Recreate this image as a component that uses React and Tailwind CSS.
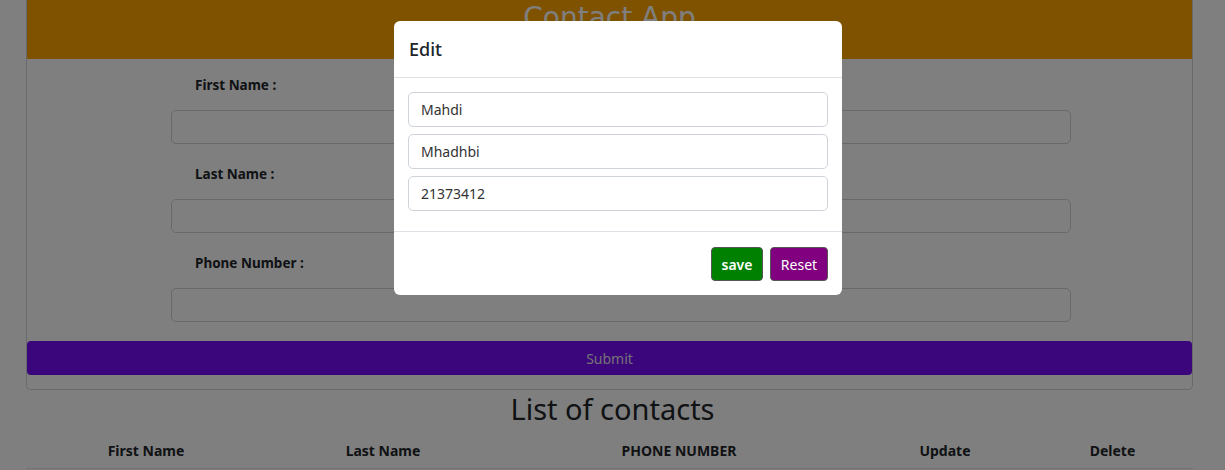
import React from 'react';

const Field = ({ label, first }) => (
  <div className={first ? 'pt-[16px]' : 'pt-[20px]'}>
    <div className="ml-[168px] h-[20px] text-[13.5px] leading-[20px] font-bold text-[#212529]">{label}</div>
    <div className="ml-[144px] mt-[15px] w-[900px] h-[34px] rounded-[5px] border border-[#ced4da] bg-white" />
  </div>
);

const ModalInput = ({ value }) => (
  <div className="mb-[7px] h-[35px] rounded-[5px] border border-[#ced4da] px-[12px] flex items-center text-[14px] text-[#333]">
    {value}
  </div>
);

export default function App() {
  return (
    <div className="relative min-h-[470px] bg-white overflow-hidden" style={{ fontFamily: '"Noto Sans", "Open Sans", sans-serif' }}>
      <div className="ml-[26px] w-[1167px] border border-t-0 border-[#ced4da] rounded-b-[5px] pb-[14px]">
        <div className="h-[59px] bg-[#ffa500] flex justify-center overflow-hidden">
          <div className="mt-[1px] text-[28px] leading-[34px] text-white" style={{ fontFamily: '"Comic Sans MS", "DejaVu Sans", cursive' }}>
            Contact App
          </div>
        </div>
        <Field label="First Name :" first />
        <Field label="Last Name :" />
        <Field label="Phone Number :" />
        <div className="mt-[19px] h-[34px] rounded-[4px] bg-[#760bf7] flex items-center justify-center text-[14px] text-[#e8e0f0]">
          Submit
        </div>
      </div>

      <div className="h-[38px] text-center text-[29px] leading-[38px] text-[#212529]">List of contacts</div>

      <div className="ml-[26px] w-[1167px] grid grid-cols-[240px_234px_358px_174px_161px] border-b border-[#dee2e6] pt-[13px] pb-[7px] text-[14px] leading-[20px] font-bold text-[#212529] text-center">
        <div>First Name</div>
        <div>Last Name</div>
        <div>PHONE NUMBER</div>
        <div>Update</div>
        <div>Delete</div>
      </div>

      <div className="absolute inset-0 bg-black/50" />

      <div className="absolute left-[394px] top-[21px] w-[448px] bg-white rounded-[6px]">
        <div className="h-[57px] px-[15px] flex items-center border-b border-[#dee2e6] text-[18px] font-medium text-[#212529]">
          Edit
        </div>
        <div className="px-[14px] pt-[14px] pb-[13px] border-b border-[#dee2e6]">
          <ModalInput value="Mahdi" />
          <ModalInput value="Mhadhbi" />
          <ModalInput value="21373412" />
        </div>
        <div className="px-[14px] pt-[15px] pb-[14px] flex justify-end gap-[7px]">
          <div className="h-[34px] w-[52px] rounded-[4px] border border-[#555] bg-[#008000] flex items-center justify-center text-[14px] font-semibold text-white">
            save
          </div>
          <div className="h-[34px] w-[58px] rounded-[4px] border border-[#555] bg-[#800080] flex items-center justify-center text-[14px] text-white">
            Reset
          </div>
        </div>
      </div>
    </div>
  );
}
